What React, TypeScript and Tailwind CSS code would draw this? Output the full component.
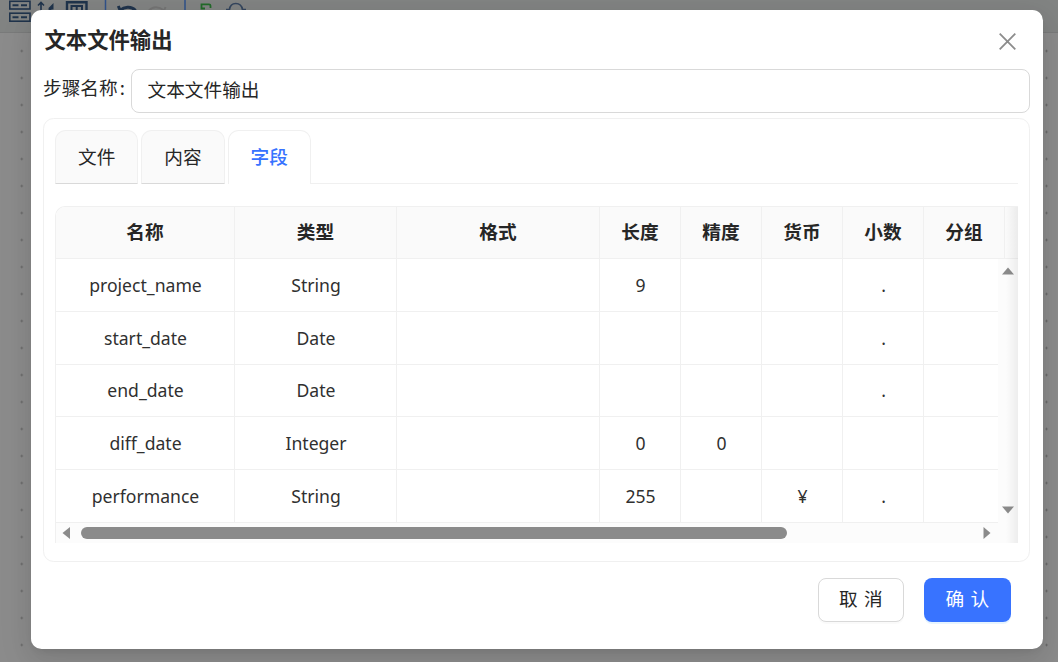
import React, { useState } from "react";

const tabs = ["文件", "内容", "字段"];

const columns = ["名称", "类型", "格式", "长度", "精度", "货币", "小数", "分组"];

const rows = [
  ["project_name", "String", "", "9", "", "", ".", ""],
  ["start_date", "Date", "", "", "", "", ".", ""],
  ["end_date", "Date", "", "", "", "", ".", ""],
  ["diff_date", "Integer", "", "0", "0", "", "", ""],
  ["performance", "String", "", "255", "", "¥", ".", ""],
];

const grid =
  "grid w-[1030px] grid-cols-[179px_162px_203px_81px_81px_81px_81px_81px_81px]";

function Toolbar() {
  return (
    <div className="h-[33px] border-b border-[#7a7b7b] bg-[#828483]">
      <svg width="260" height="32" viewBox="0 0 260 32" fill="none">
        <g stroke="#20344c" strokeWidth="1.6">
          <rect x="9.8" y="1.3" width="20.200" height="7.700" />
          <rect x="9.8" y="13.2" width="20.200" height="8" />
          <path d="M12.500 5.300h6M21 5.300h6M12.500 17.300h6M21 17.300h6" strokeWidth="2" />
          <path d="M41 12V3M38 5.500L41 2.500l3 3" />
          <path d="M47 12l5-4M49 9l3.500-3.500v4" strokeWidth="2" />
          <path d="M67 12V2.300h19.500V12" strokeWidth="2.400" />
          <path d="M71.500 12V6h10.500V12M76.700 6v6" strokeWidth="2" />
          <path d="M118.300 6l2.500 6M120 10.500c4-3.500 11-5 15.500 0" strokeWidth="3" />
        </g>
        <path d="M165.500 7l-2 5M164 10.500c-5-4-11-4.500-15 0" stroke="#757575" strokeWidth="2" />
        <path d="M105.500 0v12M185 0v12" stroke="#31528a" strokeWidth="1.500" />
        <path d="M205 8.500h-3.500V4.300h7.500q1.500 0 1.500 1.500V8" stroke="#236b2a" strokeWidth="1.800" />
        <path d="M226 9.500h3.500c1-8 11.500-8 13 0h3.500" stroke="#35465e" strokeWidth="1.700" />
      </svg>
    </div>
  );
}

function FieldTable() {
  return (
    <div className="relative h-[337px] overflow-hidden rounded-tl-[10px] border-l border-t border-[#f0f0f0]">
      <div className={`${grid} h-[52.3px] border-b border-[#f0f0f0] bg-[#fafafa]`}>
        {columns.map((c) => (
          <div
            key={c}
            className="flex items-center justify-center border-r border-[#f0f0f0] pb-[4px] font-bold"
          >
            {c}
          </div>
        ))}
      </div>
      <div className="w-[943px] overflow-hidden">
        {rows.map((row) => (
          <div key={row[0]} className={`${grid} h-[52.67px] border-b border-[#f0f0f0]`}>
            {row.map((cell, i) => (
              <div
                key={i}
                className="flex items-center justify-center border-r border-[#f0f0f0] pl-px pt-px font-['Noto_Sans','Noto_Sans_CJK_SC',sans-serif] text-[17.6px] text-[#303030]"
              >
                {cell}
              </div>
            ))}
          </div>
        ))}
      </div>
      {/* horizontal scrollbar */}
      <div className="flex h-[21px] items-center bg-[#fcfcfc] pl-[6px]">
        <svg width="8" height="12" viewBox="0 0 8 12" fill="#8b8b8b">
          <path d="M8 0v12L0.500 6z" />
        </svg>
        <div className="ml-[10.5px] h-3 w-[706px] rounded-full bg-[#8b8b8b]" />
        <svg className="ml-[196px]" width="8" height="12" viewBox="0 0 8 12" fill="#8b8b8b">
          <path d="M0.500 0v12L7.500 6z" />
        </svg>
      </div>
      {/* vertical scrollbar */}
      <div className="absolute bottom-0 right-0 top-[52.3px] flex w-5 flex-col items-center justify-between bg-[#fcfcfc] pb-[29px] pt-[8px]">
        <svg width="12" height="8" viewBox="0 0 12 8" fill="#8b8b8b">
          <path d="M0 7.500h12L6 0.500z" />
        </svg>
        <svg width="12" height="8" viewBox="0 0 12 8" fill="#8b8b8b">
          <path d="M0 0.500h12L6 7.500z" />
        </svg>
      </div>
      {/* fade that hints at more columns */}
      <div className="absolute inset-y-0 right-0 w-3 bg-linear-to-r from-transparent to-black/6" />
    </div>
  );
}

function App() {
  const [active, setActive] = useState("字段");
  const [name, setName] = useState("文本文件输出");

  return (
    <div className="relative h-[662px] w-[1058px] overflow-hidden bg-[#8c8c8c] font-['Noto_Sans_CJK_SC',sans-serif] text-[18.67px] leading-[29px] text-[#262626]">
      <Toolbar />
      <div className="h-[629px] bg-[radial-gradient(circle,#5c5c5c_0.8px,transparent_1.2px)] bg-size-[26.98px_27px] bg-position-[8.300px_4.500px]" />

      <div className="absolute left-[30.5px] top-[10px] flex h-[638.5px] w-[1012px] flex-col rounded-[10.6px] bg-white px-[12.5px] shadow-[0_8px_21px_0_rgba(0,0,0,0.08),0_4px_8px_-5px_rgba(0,0,0,0.12),0_12px_37px_11px_rgba(0,0,0,0.05)]">
        <div className="flex h-[59px] items-center justify-between pr-[14px]">
          <h1 className="pb-[2px] pl-[1.5px] text-[21.33px] font-bold">文本文件输出</h1>
          <button aria-label="关闭" className="mt-[3px]">
            <svg width="17" height="17" viewBox="0 0 17 17" stroke="#8c8c8c" strokeWidth="1.800">
              <path d="M0.700 0.700l15.600 15.600M16.300 0.700L0.700 16.300" />
            </svg>
          </button>
        </div>

        <div className="flex h-[44px] items-start">
          <label className="mt-[3px] w-[87.5px] shrink-0 whitespace-nowrap">
            步骤名称<span className="ml-[2px]">:</span>
          </label>
          <input
            className="h-[43.5px] min-w-0 flex-1 rounded-[8px] border border-[#d9d9d9] px-[16px] pb-[4px] outline-none"
            value={name}
            onChange={(e) => setName(e.target.value)}
          />
        </div>

        <div className="mt-[5px] h-[444px] rounded-[10.600px] border border-[#f0f0f0] px-[11px] pt-[11px]">
          <div className="flex h-[54px] gap-[3px]">
            {tabs.map((t) => (
              <button
                key={t}
                onClick={() => setActive(t)}
                className={
                  t === active
                    ? "w-[83.3px] rounded-t-[10.600px] border border-b-0 border-[#f0f0f0] bg-white pb-[5px] font-medium text-[#3873ff]"
                    : "w-[83.3px] rounded-t-[10.600px] border border-[#f0f0f0] border-b-[#d9d9d9] bg-[#fafafa] pb-[4px]"
                }
              >
                {t}
              </button>
            ))}
            <div className="-ml-[3px] flex-1 border-b border-[#f0f0f0]" />
          </div>
          <div className="mt-[22px]">
            <FieldTable />
          </div>
        </div>

        <div className="mt-[16px] flex justify-end gap-[20px] pr-[19.5px]">
          <button className="h-[43.5px] w-[86.5px] rounded-[8px] border border-[#d9d9d9] bg-white pb-[4px] shadow-[0_2px_0_rgba(0,0,0,0.02)]">
            <span className="-mr-[0.34em] tracking-[0.34em]">取消</span>
          </button>
          <button className="h-[43.5px] w-[86.5px] rounded-[8px] bg-[#3873ff] pb-[4px] text-white shadow-[0_2px_0_rgba(5,145,255,0.1)]">
            <span className="-mr-[0.34em] tracking-[0.34em]">确认</span>
          </button>
        </div>
      </div>
    </div>
  );
}

export default App;
